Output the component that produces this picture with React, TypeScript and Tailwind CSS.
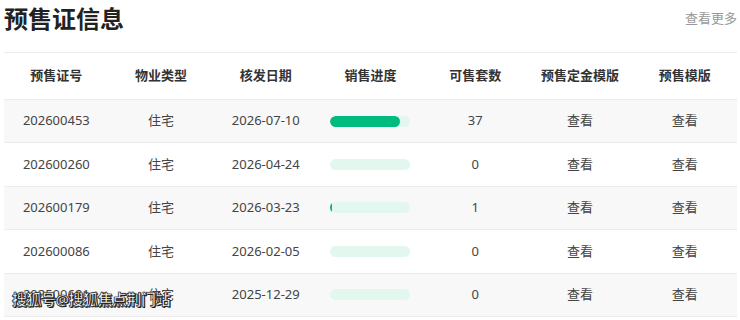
import React from "react";

const rows = [
  { no: "202600453", type: "住宅", date: "2026-07-10", pct: 87, count: 37 },
  { no: "202600260", type: "住宅", date: "2026-04-24", pct: 0, count: 0 },
  { no: "202600179", type: "住宅", date: "2026-03-23", pct: 2, count: 1 },
  { no: "202600086", type: "住宅", date: "2026-02-05", pct: 0, count: 0 },
  { no: "202500681", type: "住宅", date: "2025-12-29", pct: 0, count: 0 },
];

const headers = ["预售证号", "物业类型", "核发日期", "销售进度", "可售套数", "预售定金模版", "预售模版"];

const font = { fontFamily: '"Noto Sans", "Noto Sans CJK SC", sans-serif' };

export default function App() {
  return (
    <div className="relative w-[740px] h-[320px] overflow-hidden bg-white" style={font}>
      <div className="flex items-center justify-between pl-1 pr-[3px] h-[37px]">
        <h2 className="text-[24px] font-bold text-[#222] leading-none">预售证信息</h2>
        <span className="text-[13px] text-[#999]">查看更多</span>
      </div>
      <div className="ml-1 mr-[3px] mt-[15px] border-t border-[#ececec]">
        <div className="grid grid-cols-7 h-[47px] items-center border-b border-[#ececec]">
          {headers.map((h) => (
            <div key={h} className="text-center text-[13px] font-bold text-[#333]">
              {h}
            </div>
          ))}
        </div>
        {rows.map((r, i) => (
          <div
            key={r.no}
            className={`grid grid-cols-7 h-[43.4px] items-center border-b border-[#ececec] text-[13px] text-[#444] ${
              i % 2 === 0 ? "bg-[#f8f8f8]" : "bg-white"
            }`}
          >
            <div className="text-center">{r.no}</div>
            <div className="text-center">{r.type}</div>
            <div className="text-center">{r.date}</div>
            <div className="flex justify-center">
              <div className="w-[80px] h-[11px] rounded-full bg-[#e2f8ef] overflow-hidden">
                <div className="h-full rounded-full bg-[#00bb7e]" style={{ width: `${r.pct}%` }} />
              </div>
            </div>
            <div className="text-center">{r.count}</div>
            <div className="text-center">查看</div>
            <div className="text-center">查看</div>
          </div>
        ))}
      </div>
      <div
        className="absolute left-[12px] top-[292px] text-[15px] font-bold text-white leading-none tracking-[-0.5px]"
        style={{ WebkitTextStroke: "0.6px #222", textShadow: "0 0 1px #000, 1px 1px 0 #222" }}
      >
        搜狐号@搜狐焦点荆门站
      </div>
    </div>
  );
}
